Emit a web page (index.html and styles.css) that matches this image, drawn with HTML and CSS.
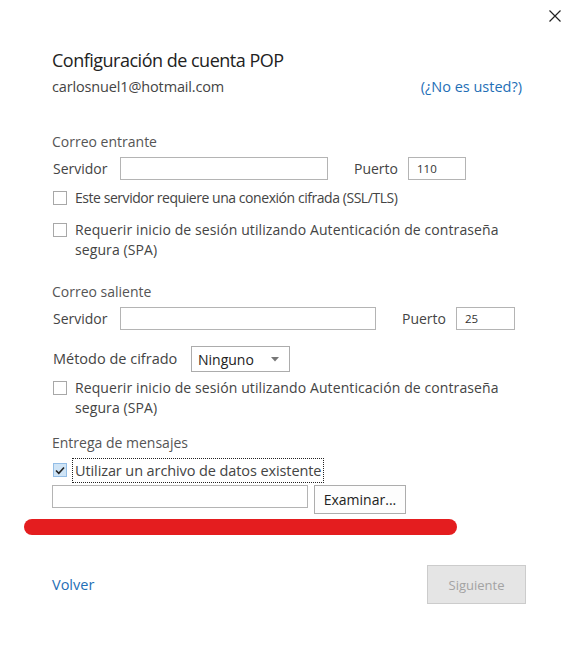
FILE: index.html
```html
<!DOCTYPE html>
<html lang="es">
<head>
<meta charset="utf-8">
<link rel="stylesheet" href="styles.css">
</head>
<body>
<div class="dialog">
  <div class="titlebar">
    <span class="close" aria-label="Cerrar">
      <svg width="12" height="12" viewBox="0 0 12 12"><path d="M0.5 0.5 L11.5 11.5 M11.5 0.5 L0.5 11.5" stroke="#222" stroke-width="1.2" fill="none"/></svg>
    </span>
  </div>
  <div class="content">
    <h1 class="title">Configuración de cuenta POP</h1>
    <div class="account">
      <span class="email">carlosnuel1@hotmail.com</span>
      <span class="link">(¿No es usted?)</span>
    </div>

    <div class="group-label g-in">Correo entrante</div>
    <div class="server-row">
      <span class="label srv">Servidor</span>
      <span class="input in-srv1"></span>
      <span class="label port-label">Puerto</span>
      <span class="input port1">110</span>
    </div>
    <div class="check c1"><span class="box"></span><span class="ctext">Este servidor requiere una conexión cifrada (SSL/TLS)</span></div>
    <div class="check c2"><span class="box"></span><span class="ctext">Requerir inicio de sesión utilizando Autenticación de contraseña segura (SPA)</span></div>

    <div class="group-label g-out">Correo saliente</div>
    <div class="server-row">
      <span class="label srv">Servidor</span>
      <span class="input in-srv2"></span>
      <span class="label port-label">Puerto</span>
      <span class="input port2">25</span>
    </div>
    <div class="method-row">
      <span class="label method">Método de cifrado</span>
      <span class="select">Ninguno<svg class="arrow" width="8" height="5" viewBox="0 0 8 5"><path d="M0 0 H8 L4 4.5 Z" fill="#777"/></svg></span>
    </div>
    <div class="check c3"><span class="box"></span><span class="ctext">Requerir inicio de sesión utilizando Autenticación de contraseña segura (SPA)</span></div>

    <div class="group-label g-del">Entrega de mensajes</div>
    <div class="check c4"><span class="box checked"><svg width="10" height="9" viewBox="0 0 10 9"><path d="M1 4.5 L3.8 7.3 L9 1.5" stroke="#222" stroke-width="1.6" fill="none"/></svg></span><span class="ctext focus">Utilizar un archivo de datos existente</span></div>
    <div class="file-row">
      <span class="input file"></span>
      <span class="btn browse">Examinar...</span>
    </div>
    <div class="redbar"></div>

    <div class="footer">
      <span class="back">Volver</span>
      <span class="btn next">Siguiente</span>
    </div>
  </div>
</div>
</body>
</html>
```
FILE: styles.css
```css
* { box-sizing: border-box; }
html, body { margin: 0; padding: 0; background: #fff; }
body {
  width: 576px;
  height: 652px;
  overflow: hidden;
  font-family: "Open Sans", "Noto Sans", "Liberation Sans", sans-serif;
  font-size: 14px;
  color: #444;
}
.dialog { width: 576px; height: 652px; }
.titlebar {
  height: 32px;
  display: flex;
  justify-content: flex-end;
  align-items: center;
  padding-right: 15px;
}
.close { display: flex; width: 12px; height: 12px; }
.content { padding-left: 52px; }
.title {
  margin: 16px 0 0;
  font-size: 18px;
  letter-spacing: -0.5px;
  font-weight: normal;
  line-height: 24px;
  color: #222;
}
.account {
  margin-top: 5px;
  height: 20px;
  line-height: 20px;
  display: flex;
  justify-content: space-between;
  padding-right: 54px;
  color: #444;
  font-size: 14.5px;
}
.email { letter-spacing: -0.15px; }
.link { color: #1f6fb6; }
.group-label {
  height: 20px;
  line-height: 20px;
  color: #555;
}
.g-in { margin-top: 35px; }
.g-out { margin-top: 22px; }
.g-del { margin-top: 15px; }
.label { color: #444; line-height: 20px; }
.server-row {
  margin-top: 5px;
  height: 23px;
  display: flex;
  align-items: center;
}
.srv { width: 68px; padding-left: 1px; }
.input {
  height: 23px;
  border: 1px solid #b4b4b4;
  background: #fff;
  font-size: 11.5px;
  line-height: 21px;
  padding-left: 8px;
  color: #333;
}
.in-srv1 { width: 208px; }
.in-srv2 { width: 256px; }
.port-label { margin-left: 26px; width: 54px; }
.port1 { width: 58px; }
.port2 { width: 59px; }
.check {
  display: flex;
  align-items: flex-start;
  line-height: 20px;
  color: #444;
}
.c1 .ctext { letter-spacing: -0.45px; }
.c2 .ctext, .c3 .ctext { letter-spacing: 0.1px; width: 445px; }
.box {
  flex: none;
  width: 14px;
  height: 14px;
  border: 1px solid #a8a8a8;
  margin: 3px 8px 0 1px;
  background: #fff;
  display: flex;
  align-items: center;
  justify-content: center;
}
.box.checked { background: #cfe4f6; border-color: #93bde6; }
.c1 { margin-top: 8px; }
.c2 { margin-top: 12px; }
.c3 { margin-top: 6px; }
.c4 { margin-top: 5px; height: 24px; align-items: center; }
.c4 .box { margin-top: 0; margin-right: 6px; }
.focus {
  outline: 1px dotted #222;
  padding: 1px 2px 1px 2px;
  line-height: 21px;
  font-size: 14.5px;
  letter-spacing: -0.1px;
}
.method-row {
  margin-top: 16px;
  height: 26px;
  display: flex;
  align-items: center;
}
.method { width: 139px; padding-left: 1px; font-size: 14.5px; }
.select {
  width: 99px;
  height: 26px;
  border: 1px solid #acacac;
  display: flex;
  align-items: center;
  justify-content: space-between;
  padding: 0 10px 0 6px;
  color: #222;
  font-size: 14px;
}
.arrow { margin-top: 1px; }
.file-row {
  margin-top: 3px;
  display: flex;
  align-items: flex-start;
}
.file { width: 256px; }
.btn {
  display: flex;
  align-items: center;
  justify-content: center;
  border: 1px solid #adadad;
}
.browse {
  margin-left: 6px;
  width: 92px;
  height: 29px;
  background: #fdfdfd;
  color: #222;
}
.redbar {
  margin: 5px 0 0 -28px;
  width: 433px;
  height: 16px;
  border-radius: 8px;
  background: #e41d1f;
}
.footer {
  margin-top: 30px;
  height: 39px;
  display: flex;
  align-items: center;
  justify-content: space-between;
  padding-right: 50px;
}
.back { color: #1f6fb6; font-size: 14.5px; }
.next {
  width: 99px;
  height: 39px;
  background: #e5e5e5;
  border-color: #cccccc;
  color: #a3a3a3;
  font-size: 13px;
}
```
